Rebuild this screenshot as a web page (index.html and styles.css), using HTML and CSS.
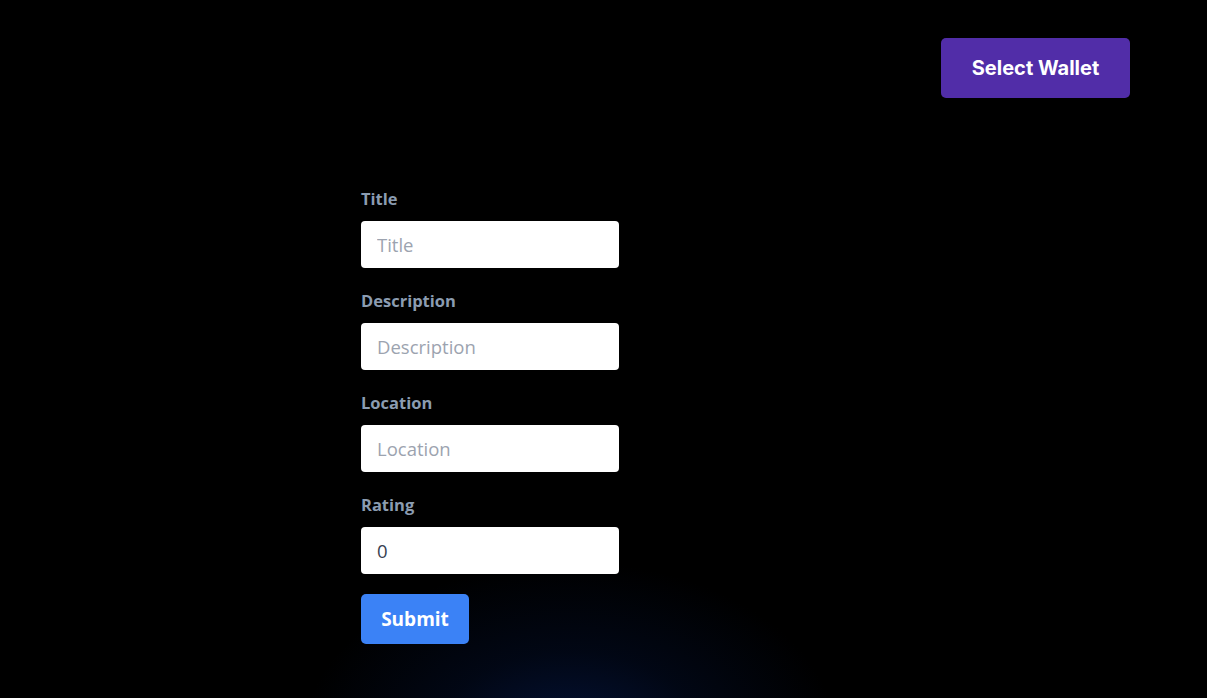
FILE: index.html
```html
<!DOCTYPE html>
<html lang="en">
<head>
<meta charset="utf-8">
<title>Form</title>
<link rel="stylesheet" href="styles.css">
</head>
<body>
<div class="page">
  <header class="topbar">
    <button class="wallet-btn" type="button">Select Wallet</button>
  </header>
  <main class="main">
    <form class="form">
      <div class="field">
        <label class="label" for="title">Title</label>
        <input class="input" id="title" type="text" placeholder="Title">
      </div>
      <div class="field">
        <label class="label" for="description">Description</label>
        <input class="input" id="description" type="text" placeholder="Description">
      </div>
      <div class="field">
        <label class="label" for="location">Location</label>
        <input class="input" id="location" type="text" placeholder="Location">
      </div>
      <div class="field">
        <label class="label" for="rating">Rating</label>
        <input class="input" id="rating" type="text" value="0">
      </div>
      <button class="submit-btn" type="button">Submit</button>
    </form>
  </main>
  <div class="glow"></div>
</div>
</body>
</html>
```
FILE: styles.css
```css
html, body {
  margin: 0;
  padding: 0;
  background: #000;
  height: 100%;
  overflow: hidden;
}
.page {
  position: relative;
  height: 698px;
  overflow: hidden;
  font-family: "Open Sans", "Noto Sans", sans-serif;
}
.glow {
  position: absolute;
  left: 300px;
  top: 560px;
  width: 540px;
  height: 300px;
  background: radial-gradient(ellipse at 50% 60%, rgba(5, 25, 75, 0.75) 0%, rgba(3, 15, 45, 0.45) 35%, rgba(0, 0, 0, 0) 70%);
  pointer-events: none;
  z-index: 0;
}
.topbar {
  display: flex;
  justify-content: flex-end;
  padding: 38px 77px 0 0;
  position: relative;
  z-index: 1;
}
.wallet-btn {
  background: #512da8;
  color: #fff;
  border: none;
  border-radius: 5px;
  height: 60px;
  width: 189px;
  font-family: "Inter", "Roboto", sans-serif;
  font-weight: 700;
  font-size: 20px;
  padding: 0;
  cursor: pointer;
}
.main {
  padding: 91px 0 0 361px;
  position: relative;
  z-index: 1;
}
.form {
  display: flex;
  flex-direction: column;
  width: 258px;
}
.field {
  display: flex;
  flex-direction: column;
  gap: 12px;
  margin-bottom: 23px;
}
.label {
  color: #8b9cb1;
  font-weight: 700;
  font-size: 16.5px;
  line-height: 20px;
}
.input {
  box-sizing: border-box;
  width: 258px;
  height: 47px;
  border: none;
  border-radius: 4px;
  background: #fff;
  padding: 0 16px;
  font-family: "Open Sans", "Noto Sans", sans-serif;
  font-size: 18.5px;
  color: #374151;
  outline: none;
}
.input::placeholder {
  color: #9ca3af;
}
.submit-btn {
  align-self: flex-start;
  width: 108px;
  height: 50px;
  margin-top: -3px;
  background: #3b82f6;
  color: #fff;
  border: none;
  border-radius: 5px;
  font-family: "Open Sans", "Noto Sans", sans-serif;
  font-weight: 700;
  font-size: 19px;
  padding: 0;
  cursor: pointer;
}
```
